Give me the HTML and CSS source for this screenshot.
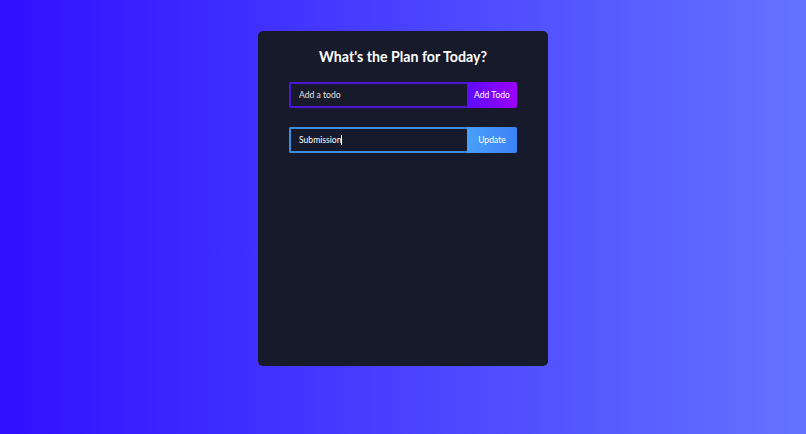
FILE: index.html
```
<!DOCTYPE html>
<html>
<head>
<meta charset="utf-8">
<link rel="stylesheet" href="styles.css">
</head>
<body>
<div class="app">
  <h1 class="title">What's the Plan for Today?</h1>
  <form class="todo-form">
    <input class="todo-input" placeholder="Add a todo">
    <button type="button" class="todo-button">Add Todo</button>
  </form>
  <form class="todo-form">
    <div class="todo-input edit">Submission<span class="caret"></span></div>
    <button type="button" class="todo-button edit">Update</button>
  </form>
</div>
</body>
</html>
```
FILE: styles.css
```
html, body {
  margin: 0;
  padding: 0;
}
body {
  min-height: 434px;
  background: linear-gradient(90deg, #3010ff 0%, #6473ff 100%);
  font-family: Lato, "Noto Sans", sans-serif;
  overflow: hidden;
}
.app {
  width: 290px;
  height: 335px;
  margin: 31px auto 0;
  background: #161a2b;
  border-radius: 5px;
  display: flex;
  flex-direction: column;
  align-items: center;
}
.title {
  margin: 17px 0 0;
  height: 17px;
  line-height: 17px;
  font-size: 14.2px;
  font-weight: 700;
  color: #fff;
}
.todo-form {
  display: flex;
  width: 228px;
  height: 26px;
}
.title + .todo-form {
  margin-top: 17px;
}
.todo-form + .todo-form {
  margin-top: 19px;
}
.todo-input {
  box-sizing: border-box;
  flex: 0 0 178px;
  height: 26px;
  margin: 0;
  padding: 0 8px;
  border: 2px solid #4b16d8;
  border-right: none;
  border-radius: 2px 0 0 2px;
  background: transparent;
  color: #fff;
  font-family: Lato, "Noto Sans", sans-serif;
  font-size: 8.6px;
  outline: none;
  display: flex;
  align-items: center;
}
.todo-input::placeholder {
  color: #e2e2e6;
  opacity: 1;
}
.todo-input.edit {
  border: 2px solid #3a8ee0;
  border-right: none;
}
.caret {
  display: inline-block;
  width: 1px;
  height: 10px;
  background: #fff;
}
.todo-button {
  flex: 1;
  margin: 0;
  border: none;
  border-radius: 0 2px 2px 0;
  background: linear-gradient(90deg, #5d0cff 0%, #9b00fa 100%);
  color: #fff;
  font-family: Lato, "Noto Sans", sans-serif;
  font-size: 8.6px;
  padding: 0;
  cursor: pointer;
}
.todo-button.edit {
  background: linear-gradient(90deg, #4aa0fa 0%, #3b82f6 100%);
}
```
